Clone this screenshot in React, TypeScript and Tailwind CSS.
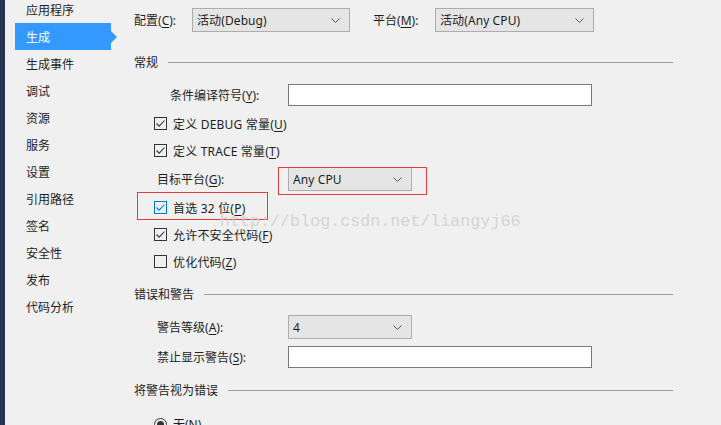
import React from "react";

const font = {
  fontFamily: '"Noto Sans", "Noto Sans CJK SC", sans-serif',
};

const navItems = [
  "应用程序",
  "生成",
  "生成事件",
  "调试",
  "资源",
  "服务",
  "设置",
  "引用路径",
  "签名",
  "安全性",
  "发布",
  "代码分析",
];

function Label({ text, k, tail = ":" }: { text: string; k: string; tail?: string }) {
  return (
    <span className="whitespace-nowrap relative top-[1px]">
      {text}(<span className="underline underline-offset-2">{k}</span>){tail}
    </span>
  );
}

function Chevron() {
  return (
    <svg width="9" height="5" viewBox="0 0 9 5" className="shrink-0">
      <path d="M0.5 0.5 L4.5 4.5 L8.5 0.5" fill="none" stroke="#555" strokeWidth="1" />
    </svg>
  );
}

function Select({ value, w }: { value: string; w: string }) {
  return (
    <div
      className={`${w} h-[24px] flex items-center justify-between pl-[4px] pr-[9px] bg-[#e5e5e5] border border-[#adadad] text-[#1e1e1e]`}
    >
      <span className="relative top-[1px] tracking-[0.1px]">{value}</span>
      <Chevron />
    </div>
  );
}

function TextBox() {
  return <div className="w-[304px] h-[22px] bg-white border border-[#7a7a7a]" />;
}

function Check({ checked, blue, children }: { checked: boolean; blue?: boolean; children: React.ReactNode }) {
  const c = blue ? "#0078d7" : "#333333";
  return (
    <div className="h-[27px] flex items-center pl-[20px] gap-[6px]">
      <div
        className="w-[13px] h-[13px] border bg-transparent flex items-center justify-center"
        style={{ borderColor: c }}
      >
        {checked && (
          <svg width="11" height="11" viewBox="0 0 11 11">
            <path d="M1.5 5.5 L4.2 8.2 L9.5 2.5" fill="none" stroke={c} strokeWidth="1.1" />
          </svg>
        )}
      </div>
      <span className="relative top-[1px] tracking-[0.2px]">{children}</span>
    </div>
  );
}

function Header({ children }: { children: React.ReactNode }) {
  return (
    <div className="h-[16px] flex items-center gap-[10px] w-[539px]">
      <span className="whitespace-nowrap relative top-[1px]">{children}</span>
      <div className="flex-1 h-px bg-[#a0a0a0]" />
    </div>
  );
}

export default function App() {
  return (
    <div
      className="relative w-[721px] h-[425px] overflow-hidden bg-[#f0f0f0] flex text-[12px] text-[#1e1e1e] leading-none"
      style={font}
    >
      <div className="w-[5px] h-full bg-[#283550] shrink-0" />
      <div className="w-[115px] shrink-0 flex flex-col mt-[-4px] pl-[10px]">
        {navItems.map((item) => {
          const active = item === "生成";
          return (
            <div key={item} className="relative h-[27px] w-[96px] flex items-center">
              {active && (
                <>
                  <div className="absolute inset-0 bg-[#3399ff]" />
                  <div className="absolute right-[-6px] top-[8px] w-0 h-0 border-y-[6px] border-y-transparent border-l-[6px] border-l-[#3399ff]" />
                </>
              )}
              <span className={`relative top-[1px] pl-[11px] ${active ? "text-white" : ""}`}>{item}</span>
            </div>
          );
        })}
      </div>

      <div className="flex-1 flex flex-col">
        {/* top config bar */}
        <div className="mt-[8px] h-[24px] flex items-center pl-[14px]">
          <span className="w-[58px]">
            <Label text="配置" k="C" />
          </span>
          <Select value="活动(Debug)" w="w-[158px]" />
          <span className="ml-[23px] w-[62px]">
            <Label text="平台" k="M" />
          </span>
          <Select value="活动(Any CPU)" w="w-[159px]" />
        </div>
        <div className="mt-[16px] ml-[12px] h-px bg-[#a0a0a0]" />

        <div className="pl-[14px] flex flex-col">
          <div className="mt-[6px]">
            <Header>常规</Header>
          </div>

          <div className="mt-[14px] h-[22px] flex items-center">
            <span className="pl-[36px] w-[154px]">
              <Label text="条件编译符号" k="Y" />
            </span>
            <TextBox />
          </div>

          <div className="mt-[4px]">
            <Check checked>
              定义 DEBUG 常量(<span className="underline underline-offset-2">U</span>)
            </Check>
            <Check checked>
              定义 TRACE 常量(<span className="underline underline-offset-2">T</span>)
            </Check>
          </div>

          <div className="mt-[3px] h-[24px] flex items-center">
            <span className="pl-[23px] w-[154px]">
              <Label text="目标平台" k="G" />
            </span>
            <Select value="Any CPU" w="w-[124px]" />
          </div>

          <div className="mt-[3px]">
            <Check checked blue>
              首选 32 位(<span className="underline underline-offset-2">P</span>)
            </Check>
            <Check checked>
              允许不安全代码(<span className="underline underline-offset-2">F</span>)
            </Check>
            <Check checked={false}>
              优化代码(<span className="underline underline-offset-2">Z</span>)
            </Check>
          </div>

          <div className="mt-[11px]">
            <Header>错误和警告</Header>
          </div>

          <div className="mt-[13px] h-[24px] flex items-center">
            <span className="pl-[23px] w-[154px]">
              <Label text="警告等级" k="A" />
            </span>
            <Select value="4" w="w-[124px]" />
          </div>

          <div className="mt-[7px] h-[22px] flex items-center">
            <span className="pl-[23px] w-[154px]">
              <Label text="禁止显示警告" k="S" />
            </span>
            <TextBox />
          </div>

          <div className="mt-[14px]">
            <Header>将警告视为错误</Header>
          </div>

          <div className="mt-[19px] h-[14px] flex items-center pl-[20px] gap-[6px]">
            <div className="w-[13px] h-[13px] rounded-full border border-[#333] flex items-center justify-center">
              <div className="w-[7px] h-[7px] rounded-full bg-[#333]" />
            </div>
            <span className="relative top-[1px]">
              无(<span className="underline underline-offset-2">N</span>)
            </span>
          </div>
        </div>
      </div>

      {/* annotation overlays */}
      <div className="absolute left-[278px] top-[167px] w-[149px] h-[28px] border border-[#e53a3a]" />
      <div className="absolute left-[137px] top-[192px] w-[131px] h-[28px] border border-[#e53a3a]" />
      <div
        className="absolute left-[220px] top-[212px] text-[16.7px] leading-[20px] text-[#d6d4d0] pointer-events-none"
        style={{ fontFamily: '"Liberation Mono", monospace' }}
      >
        http://blog.csdn.net/liangyj66
      </div>
    </div>
  );
}
